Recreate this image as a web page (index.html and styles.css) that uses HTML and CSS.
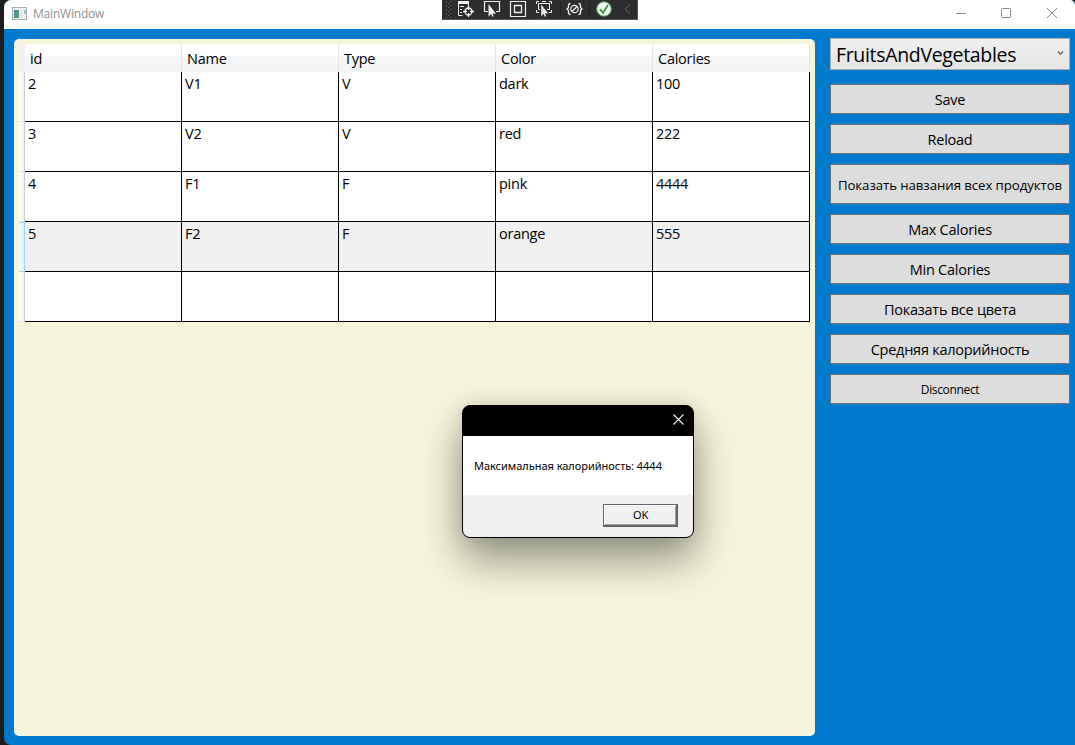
FILE: index.html
```
<!DOCTYPE html>
<html lang="ru">
<head>
<meta charset="utf-8">
<title>MainWindow</title>
<link rel="stylesheet" href="styles.css">
</head>
<body>
<div class="window">
  <header class="titlebar">
    <svg class="app-icon" width="15" height="13" viewBox="0 0 15 13">
      <defs><linearGradient id="screen" x1="0" y1="0" x2="1" y2="1"><stop offset="0" stop-color="#4d84ab"/><stop offset="1" stop-color="#55a56c"/></linearGradient></defs>
      <rect x=".5" y=".5" width="14" height="12" fill="#f1f3f3" stroke="#a6acb0"/>
      <rect x="2" y="3" width="5" height="8" fill="url(#screen)"/>
      <path d="M8 3h3v8H8z" fill="#e3e5e5"/><path d="M12 3h2v4h-2z" fill="#9cc5b5"/>
    </svg>
    <span class="title">MainWindow</span>
    <svg class="controls" width="104" height="12" viewBox="0 0 104 12" fill="none" stroke="#8b8b8b">
      <path d="M0 6.5h10"/><rect x="45.5" y="1.5" width="9" height="9" rx="1"/><path d="M91 1l10 10M101 1L91 11"/>
    </svg>
  </header>
  <main class="content">
    <section class="panel">
      <div class="grid">
        <div class="row head"><i class="rowhead"></i><span>id</span><span>Name</span><span>Type</span><span>Color</span><span>Calories</span></div>
        <div class="row"><i class="rowhead"></i><span>2</span><span>V1</span><span>V</span><span>dark</span><span>100</span></div>
        <div class="row"><i class="rowhead"></i><span>3</span><span>V2</span><span>V</span><span>red</span><span>222</span></div>
        <div class="row"><i class="rowhead"></i><span>4</span><span>F1</span><span>F</span><span>pink</span><span>4444</span></div>
        <div class="row selected"><i class="rowhead"></i><span>5</span><span>F2</span><span>F</span><span>orange</span><span>555</span></div>
        <div class="row"><i class="rowhead"></i><span></span><span></span><span></span><span></span><span></span></div>
      </div>
    </section>
    <aside class="actions">
      <div class="combo"><span>FruitsAndVegetables</span>
        <svg width="7" height="5" viewBox="0 0 7 5" fill="none" stroke="#606060" stroke-width="1.200"><path d="M1 .5l2.500 2.800L6 .5"/></svg>
      </div>
      <button class="btn">Save</button>
      <button class="btn">Reload</button>
      <button class="btn tall">Показать навзания всех продуктов</button>
      <button class="btn">Max Calories</button>
      <button class="btn">Min Calories</button>
      <button class="btn">Показать все цвета</button>
      <button class="btn">Средняя калорийность</button>
      <button class="btn small">Disconnect</button>
    </aside>
  </main>
</div>

<div class="debugbar">
  <svg width="196" height="20" viewBox="0 0 196 20" fill="none" stroke="#f0f0f0">
    <g stroke="#68686b" stroke-dasharray="1 3"><path d="M4.5 1v17M8.5 1v17"/><path d="M6.500 3v15M2.500 3v0"/></g>
    <path d="M16 2.500h11" stroke-width="3"/>
    <path d="M16.500 2v13.500h4M18 6.500h4M18 9.500h2M18 12.500h2M26.500 4v2"/>
    <circle cx="26.500" cy="11.500" r="3.500" stroke-width="1.300"/><path d="M26.500 6v4M26.500 13v4M21 11.500h4M28 11.500h4" stroke-width="1.300"/>
    <path d="M46 11.500h-3.500v-10h15v10H54" stroke-width="1.200"/><path d="M46.500 4v12.500l3-3 4.500.2z" fill="#f0f0f0" stroke="none"/><path d="M49 12l2 4.500" stroke-width="1.500"/>
    <path d="M68.500 1.500h15v15h-15z" stroke-width="1.200"/><path d="M72.500 5.500h7v7h-7z" stroke-width="1.300"/>
    <path d="M94.500 4V1.500H97M107 1.500h2.500V4M109.500 10v2.500H107M94.500 10v2.500H97M100 1.500h4"/><path d="M98 9.500h-1.500v-6h11v6H105"/><path d="M99 4v12.500l3-3 4.500.2z" fill="#f0f0f0" stroke="#2d2d30" stroke-width=".4"/><path d="M101.500 12l2 4.500" stroke-width="1.500"/>
    <path d="M118.500 2v14M147.500 2v14" stroke="#222224"/>
    <path d="M128.500 3.500q-2 0-2 2v2l-1.500 1.500 1.500 1.500v2q0 2 2 2M136.500 3.500q2 0 2 2v2l1.500 1.500-1.500 1.500v2q0 2-2 2" stroke-width="1.300"/><circle cx="132.500" cy="9" r="3.700" stroke-width="1.200"/><path d="M130 11.500l5-5" stroke-width="1.300"/>
    <circle cx="162" cy="9" r="7.300" fill="#f4f4f4" stroke="#3b9c43"/><path d="M158 9l3 4 5-8" stroke="#2f9637" stroke-width="1.800"/>
    <path d="M188 4.500l-5 4.500 5 4.500" stroke="#66666a"/>
  </svg>
</div>

<div class="dialog">
  <div class="dialog-title"><svg width="11" height="11" viewBox="0 0 11 11" fill="none" stroke="#f2f2f2" stroke-width="1.100"><path d="M.5 .5l10 10M10.500 .5l-10 10"/></svg></div>
  <div class="dialog-body"><span>Максимальная калорийность: 4444</span></div>
  <div class="dialog-foot"><button class="ok"><span>OK</span></button></div>
</div>
</body>
</html>
```
FILE: styles.css
```
* { box-sizing: border-box; }
body { margin: 0; width: 1075px; height: 745px; overflow: hidden; background: #1d1d1d; color: #000; font: 14.5px/20px "Open Sans", "Noto Sans", sans-serif; letter-spacing: -.25px; padding-left: 4px; }
svg { display: block; flex: none; }
button { font: inherit; color: inherit; letter-spacing: inherit; margin: 0; padding: 0; border-radius: 0; white-space: nowrap; }
.window { height: 745px; display: flex; flex-direction: column; background: #007acc; border-radius: 7px 5px 0 7px; overflow: hidden; }
.titlebar { height: 29px; background: #fff; display: flex; align-items: center; padding: 0 15px 3px 8px; flex: none; }
.title { margin-left: 6px; font-size: 12px; letter-spacing: -.2px; color: #929292; flex: 1; padding-top: 2px; }
.content { flex: 1; display: flex; padding: 9px 5px 9px 10px; }
.panel { width: 801px; margin: 1px 15px 0 0; background: #f5f5dc; border-radius: 5px; padding: 5px; }
.grid { width: 791px; }
.row { display: grid; grid-template-columns: 6px repeat(5, 157px); height: 50px; }
.row span { background: #fff; border-right: 1px solid #000; border-bottom: 1px solid #000; padding: 2px 3px; }
.row .rowhead { background: linear-gradient(90deg, #fff, #eef0f3); border-right: 1px solid #ccc; border-bottom: 1px solid #e6e6e6; }
.row.head { height: 28px; }
.row.head span { background: linear-gradient(#fff 0, #fff 40%, #f7f8fa 41%, #f1f2f4); border-color: #e4e5e7; border-bottom-color: #d0d1d3; padding: 5px; }
.row.head .rowhead { background: #f0f0f0; border-color: #f0f0f0 #f0f0f0 #d0d1d3; }
.row.selected span { background: #f0f0f0; }
.row.selected .rowhead { background: linear-gradient(90deg, #f5fbff, #dceefa); border: 1px solid #98d8f5; border-left: 0; }
.actions { width: 240px; display: flex; flex-direction: column; gap: 10px; }
.combo { height: 32px; margin-bottom: 4px; display: flex; align-items: center; justify-content: space-between; padding: 0 5px; border: 1px solid #acacac; background: linear-gradient(#f0f0f0, #e5e5e5); font-size: 19.5px; letter-spacing: -.33px; }
.combo span { padding-top: 2px; }
.combo svg { margin-top: -2px; }
.btn { height: 30px; border: 1px solid #707070; background: #ddd; flex: none; padding-top: 2px; }
.tall { height: 40px; font-size: 13.25px; letter-spacing: -.08px; }
.small { font-size: 12px; letter-spacing: -.35px; }
.debugbar { position: absolute; left: 442px; top: 0; width: 196px; height: 20px; background: #2d2d30; border: solid #555; border-width: 0 1px 1px 0; }
.dialog { position: absolute; left: 462px; top: 405px; width: 232px; height: 133px; border: 1px solid #000; border-radius: 8px; background: #000; overflow: hidden; box-shadow: 0 22px 42px rgba(0,0,0,.4), 0 0 22px rgba(0,0,0,.1); display: flex; flex-direction: column; font-size: 11px; letter-spacing: 0; }
.dialog-title { height: 30px; display: flex; justify-content: flex-end; align-items: center; padding: 0 9.5px 3px 0; }
.dialog-body { height: 59px; background: #fff; display: flex; align-items: center; padding: 0 11px; white-space: nowrap; letter-spacing: -.03px; font-family: "Noto Sans", sans-serif; }
.dialog-foot { flex: 1; background: #f0f0f0; display: flex; justify-content: flex-end; padding: 9px 15px 0 0; }
.ok { width: 75px; height: 23px; background: #f0f0f0; border: 1px solid #646464; border-right-width: 2px; border-bottom-width: 2px; box-shadow: inset 1px 1px #fff, inset -1px -1px #a0a0a0; font-family: "Noto Sans", sans-serif; line-height: 18px; padding-left: 1px; letter-spacing: -.3px; }
```
